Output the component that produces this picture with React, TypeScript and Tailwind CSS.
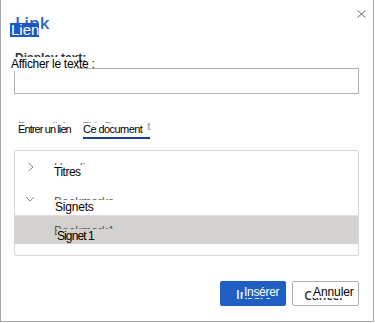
import React from "react";

const EN = "font-['Open_Sans',sans-serif]";
const FR = "font-['Liberation_Sans',Arial,sans-serif]";

function ChevronRight() {
  return (
    <svg width="10" height="10" viewBox="0 0 10 10" className="shrink-0">
      <path d="M3.5 1 L8 5 L3.5 9" fill="none" stroke="#8a8886" strokeWidth="1" />
    </svg>
  );
}

function ChevronDown() {
  return (
    <svg width="10" height="10" viewBox="0 0 10 10" className="shrink-0">
      <path d="M1 3 L5 7 L9 3" fill="none" stroke="#8a8886" strokeWidth="1" />
    </svg>
  );
}

export default function App() {
  return (
    <div className="w-[375px] h-[323px] bg-white">
      <div className="relative w-[374px] h-[322px] border-l border-r border-b border-[#a6a6a6] bg-white flex flex-col">
        {/* header */}
        <div className="flex justify-between items-start h-[44px]">
          <div className="relative ml-[14px] mt-[13px]">
            <div className={`${EN} text-[17px] leading-[17px] font-semibold text-[#2a63c1] pt-[1px]`}>Link</div>
            <div
              className={`${FR} absolute left-[-5px] top-[10px] w-[29px] h-[14px] bg-[#1c58c3] text-white text-[15px] leading-[14px] pl-[1px] whitespace-nowrap`}
            >
              Lien
            </div>
          </div>
          <svg width="9" height="8" viewBox="0 0 9 8" className="mt-[10px] mr-[7px]">
            <path d="M0.5 0.5 L8.5 7.5 M8.5 0.5 L0.5 7.5" stroke="#6e6e6e" strokeWidth="1" />
          </svg>
        </div>

        {/* display text label */}
        <div className="relative ml-[14px] h-[24px]">
          <div className={`${FR} text-[12px] leading-[16px] font-bold text-[#323130] pt-[6px]`}>Display text:</div>
          <div
            className={`${FR} absolute left-[-4px] top-[13px] w-[66px] h-[14px] bg-white text-black text-[12px] leading-[14px] whitespace-nowrap tracking-[-0.3px]`}
          >
            Afficher le texte :
          </div>
        </div>

        {/* input */}
        <div className="ml-[13px] w-[345px] h-[26px] border border-[#b1b1b1] bg-white" />

        {/* tabs */}
        <div className="flex items-start ml-[17px] mt-[24px] h-[21px]">
          <div className="relative w-[65px]">
            <div className={`${FR} text-[10px] leading-[16px] text-[#8a8886] whitespace-nowrap pt-[1px]`}>Enter a link</div>
            <div
              className={`${FR} absolute left-0 top-[5px] w-[62px] h-[13px] bg-white text-black text-[11px] leading-[13px] whitespace-nowrap tracking-[-0.9px]`}
            >
              Entrer un lien
            </div>
          </div>
          <div className="relative">
            <div className={`${FR} text-[10px] leading-[16px] text-[#8a8886] whitespace-nowrap pt-[1px]`}>This Document</div>
            <div
              className={`${FR} absolute left-0 top-[5px] w-[64px] h-[13px] bg-white text-black text-[11px] leading-[13px] whitespace-nowrap tracking-[-0.55px]`}
            >
              Ce document
            </div>
            <div className="absolute left-0 top-[19px] w-[67px] h-[2px] bg-[#1f3f8c]" />
          </div>
        </div>

        {/* tree */}
        <div className="ml-[13px] mt-[11px] w-[345px] h-[106px] border border-[#d6d6d6] rounded-[2px] flex flex-col">
          <div className="flex items-center h-[32px] pl-[10px]">
            <ChevronRight />
            <div className="relative ml-[19px]">
              <div className={`${FR} text-[12px] leading-[16px] text-[#605e5c] pt-[2px]`}>Headings</div>
              <div
                className={`${FR} absolute left-0 top-[7px] w-[52px] h-[15px] bg-white text-black text-[12px] leading-[14px] whitespace-nowrap tracking-[-0.5px]`}
              >
                Titres
              </div>
            </div>
          </div>
          <div className="flex items-center h-[32px] pl-[10px]">
            <ChevronDown />
            <div className="relative ml-[19px] mt-[4px]">
              <div className={`${FR} text-[12px] leading-[16px] text-[#605e5c] pt-[1px]`}>Bookmarks</div>
              <div
                className={`${FR} absolute left-[1px] top-[7px] w-[60px] h-[15px] bg-white text-black text-[12px] leading-[14px] whitespace-nowrap tracking-[-0.2px]`}
              >
                Signets
              </div>
            </div>
          </div>
          <div className="flex items-center h-[29px] pl-[10px] bg-[#d3d2d1] border-t border-[#e1dfdd]">
            <div className="w-[10px]" />
            <div className="relative ml-[19px]">
              <div className={`${FR} text-[12px] leading-[16px] text-[#605e5c] pt-[1px]`}>Bookmark1</div>
              <div
                className={`${FR} absolute left-[3px] top-[7px] w-[60px] h-[14px] bg-[#d3d2d1] text-black text-[12px] leading-[14px] whitespace-nowrap tracking-[-0.9px]`}
              >
                Signet 1
              </div>
            </div>
          </div>
        </div>

        {/* buttons */}
        <div className="flex justify-end gap-[6px] mr-[14px] mt-[25px]">
          <div className="relative w-[66px] h-[25px] bg-[#1f5fc4] rounded-[2px] flex items-center justify-center overflow-hidden">
            <div className={`${EN} text-[12px] leading-[16px] text-white font-semibold mt-[3px]`}>Insert</div>
            <div
              className={`${FR} absolute left-[23px] top-[4px] w-[40px] h-[13px] bg-[#1f5fc4] text-white text-[12px] leading-[14px] whitespace-nowrap tracking-[-0.3px] pl-[1px]`}
            >
              Insérer
            </div>
          </div>
          <div className="relative w-[67px] h-[25px] bg-white border border-[#b0b0b0] rounded-[2px] flex items-center justify-center">
            <div className={`${EN} text-[12px] leading-[16px] text-[#323130] font-semibold mt-[4px] mr-[4px]`}>Cancel</div>
            <div
              className={`${FR} absolute left-[20px] top-[4px] h-[12px] bg-white text-black text-[12px] leading-[12px] whitespace-nowrap tracking-[-0.1px]`}
            >
              Annuler
            </div>
          </div>
        </div>
      </div>
    </div>
  );
}
